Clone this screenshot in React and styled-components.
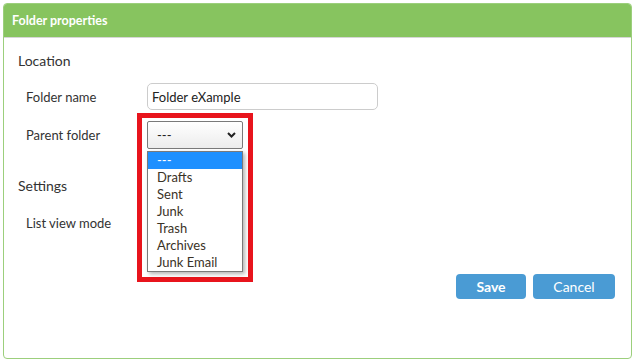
import React from "react";
import styled, { createGlobalStyle } from "styled-components";

const Global = createGlobalStyle`
  body { margin: 0; background: #fff; font-family: Lato, "Open Sans", "Liberation Sans", sans-serif; }
  * { box-sizing: border-box; }
`;

const Panel = styled.div`
  margin: 3px;
  width: 629px;
  height: 356px;
  border: 1px solid #9ccf7c;
  border-radius: 4px;
  display: flex;
  flex-direction: column;
  overflow: hidden;
`;

const Header = styled.div`
  height: 34px;
  flex: none;
  background: #87c45f;
  border-bottom: 1px solid #d6d6d6;
  padding: 0 8px;
  display: flex;
  align-items: center;
  color: #fff;
  font-weight: 700;
  font-size: 12.5px;
`;

const Body = styled.div`
  flex: 1;
  display: flex;
  flex-direction: column;
  padding: 13px 16px 0 14px;
`;

const SectionTitle = styled.div`
  font-size: 14px;
  line-height: 20px;
  color: #333;
  margin-top: ${(p) => p.$mt || 0}px;
`;

const Row = styled.div`
  display: flex;
  align-items: center;
  padding-left: 8px;
  height: ${(p) => p.$h}px;
  margin-top: ${(p) => p.$mt}px;
`;

const Label = styled.div`
  width: 121px;
  font-size: 13px;
  color: #333;
`;

const TextInput = styled.div`
  width: 231px;
  height: 27px;
  border: 1px solid #ccc;
  border-radius: 5px;
  padding: 0 4px;
  display: flex;
  align-items: center;
  font-size: 13px;
  color: #222;
`;

const SelectWrap = styled.div`
  position: relative;
  width: 96px;
  height: 28px;
`;

const SelectBox = styled.div`
  width: 96px;
  height: 28px;
  border: 1px solid #7a7a7a;
  border-radius: 2px;
  background: linear-gradient(#ffffff, #ececec);
  display: flex;
  align-items: center;
  justify-content: space-between;
  padding: 0 6px 0 9px;
  font-size: 13px;
  color: #222;
`;

const Highlight = styled.div`
  position: absolute;
  left: -10px;
  top: -8px;
  width: 116px;
  height: 169px;
  border: 5px solid #e8141c;
  pointer-events: none;
`;

const List = styled.div`
  position: absolute;
  left: 0;
  top: 30px;
  width: 96px;
  border: 1px solid #7a7a7a;
  background: #fff;
  box-shadow: 2px 2px 4px rgba(0, 0, 0, 0.3);
  z-index: 2;
`;

const Option = styled.div`
  height: 17px;
  line-height: 17px;
  padding-left: 9px;
  font-size: 13px;
  color: ${(p) => (p.$active ? "#fff" : "#3a3226")};
  background: ${(p) => (p.$active ? "#1e90ff" : "transparent")};
`;

const Actions = styled.div`
  display: flex;
  justify-content: flex-end;
  gap: 7px;
  margin-top: 37px;
`;

const Button = styled.button`
  width: ${(p) => p.$w}px;
  height: 25px;
  border: none;
  border-radius: 4px;
  background: #4a9bd4;
  color: #fff;
  font-family: inherit;
  font-size: 14px;
  font-weight: ${(p) => (p.$bold ? 700 : 400)};
  padding: 0;
`;

const Chevron = () => (
  <svg width="9" height="6" viewBox="0 0 9 6">
    <path d="M1 1 L4.5 4.5 L8 1" fill="none" stroke="#222" strokeWidth="2" />
  </svg>
);

const options = ["---", "Drafts", "Sent", "Junk", "Trash", "Archives", "Junk Email"];

export default function App() {
  return (
    <>
      <Global />
      <Panel>
        <Header>Folder properties</Header>
        <Body>
          <SectionTitle>Location</SectionTitle>
          <Row $h={27} $mt={12}>
            <Label>Folder name</Label>
            <TextInput>Folder eXample</TextInput>
          </Row>
          <Row $h={28} $mt={11}>
            <Label>Parent folder</Label>
            <SelectWrap>
              <SelectBox>
                <span>---</span>
                <Chevron />
              </SelectBox>
              <List>
                {options.map((o, i) => (
                  <Option key={o} $active={i === 0}>{o}</Option>
                ))}
              </List>
              <Highlight />
            </SelectWrap>
          </Row>
          <SectionTitle $mt={27}>Settings</SectionTitle>
          <Row $h={28} $mt={13}>
            <Label>List view mode</Label>
          </Row>
          <Actions>
            <Button $w={70} $bold>Save</Button>
            <Button $w={82}>Cancel</Button>
          </Actions>
        </Body>
      </Panel>
    </>
  );
}
